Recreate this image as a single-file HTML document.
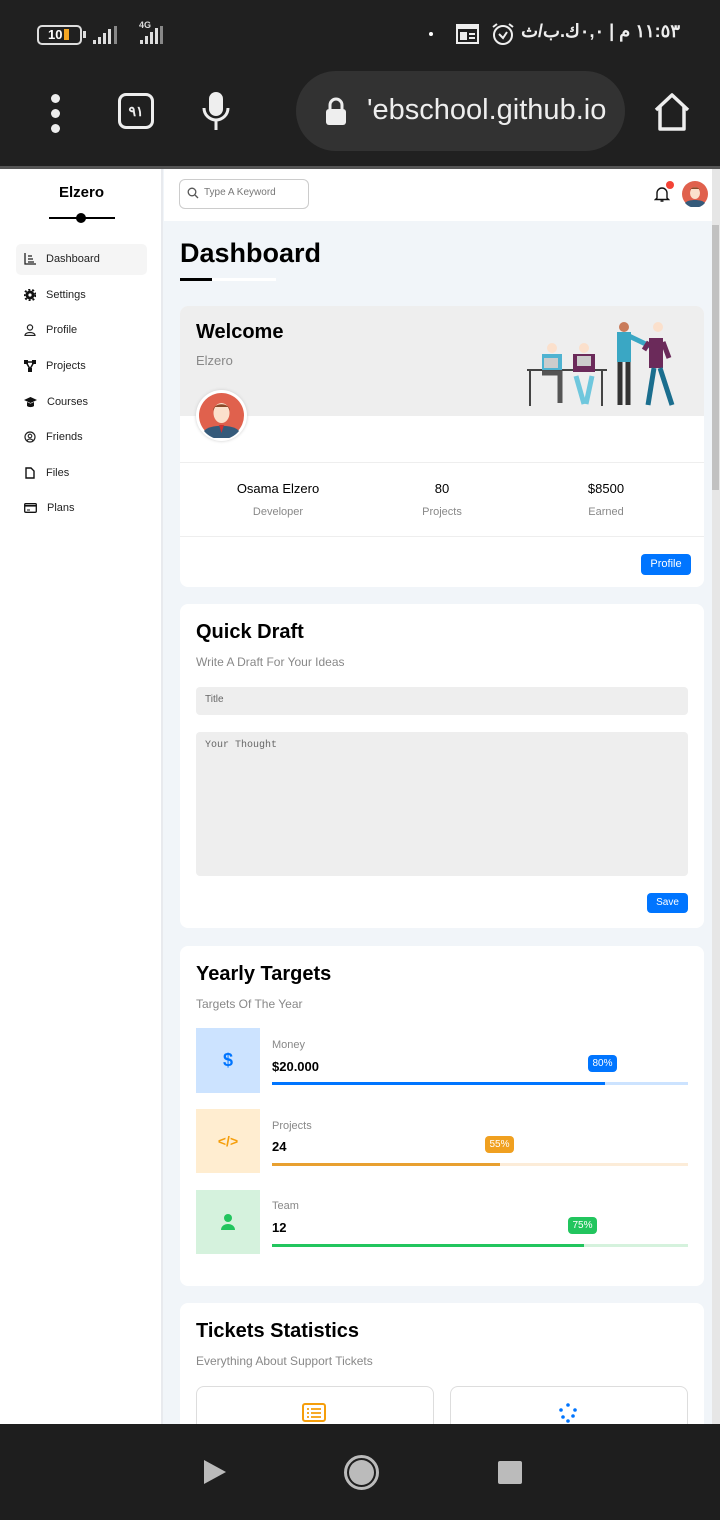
<!DOCTYPE html>
<html><head><meta charset="utf-8"><style>
*{box-sizing:border-box;margin:0;padding:0}
body{width:720px;height:1520px;overflow:hidden;background:#f1f5f9;font-family:"Liberation Sans","Noto Sans CJK SC",sans-serif;position:relative}
.abs{position:absolute}
.top{left:0;top:0;width:720px;height:166px;background:#202020}
.sep{left:0;top:166px;width:720px;height:3px;background:#555}
.side{left:0;top:169px;width:163px;height:1255px;background:#fff;border-right:2px solid #e8eaee}
.hdr{left:164px;top:169px;width:548px;height:52px;background:#fff}
.sb{left:712px;top:169px;width:8px;height:1255px;background:#e6e6e6}
.card{background:#fff;border-radius:8px}
.nav{left:0;top:1424px;width:720px;height:96px;background:#1e1e1e}
.mi{position:absolute;left:24px;font-size:11px;color:#222;display:flex;align-items:center}
.mi svg{margin-right:10px}
h2{font-size:20px;font-weight:bold;color:#000}
.sub{font-size:12px;color:#888}
</style></head><body>
<div class="abs top"></div>
<div class="abs" style="left:37px;top:25px;width:45px;height:20px;border:2px solid #ddd;border-radius:5px;color:#fff;font-size:13px;font-weight:bold;padding-left:9px;line-height:16px">10<span style="display:inline-block;width:5px;height:11px;background:#f5a623;margin-left:2px;vertical-align:-1px"></span></div>
<div class="abs" style="left:83px;top:31px;width:3px;height:7px;background:#ddd"></div>
<svg class="abs" style="left:93px;top:24px" width="30" height="22"><g fill="#ddd"><rect x="0" y="16" width="3" height="4"/><rect x="5" y="13" width="3" height="7"/><rect x="10" y="9" width="3" height="11"/><rect x="15" y="5" width="3" height="15"/><rect x="21" y="2" width="3" height="18" fill="#888"/></g></svg>
<div class="abs" style="left:139px;top:20px;color:#ddd;font-size:9px;font-weight:bold">4G</div>
<svg class="abs" style="left:136px;top:24px" width="40" height="22"><g fill="#ddd"><rect x="4" y="16" width="3" height="4"/><rect x="9" y="12" width="3" height="8"/><rect x="14" y="8" width="3" height="12"/><rect x="19" y="4" width="3" height="16"/><rect x="24" y="2" width="3" height="18" fill="#888"/></g></svg>
<div class="abs" style="left:429px;top:32px;width:4px;height:4px;background:#fff;border-radius:50%"></div>
<svg class="abs" style="left:456px;top:23px" width="24" height="22"><rect x="1" y="2" width="21" height="18" fill="none" stroke="#eee" stroke-width="2"/><rect x="1" y="2" width="21" height="4" fill="#eee"/><rect x="4" y="9" width="7" height="8" fill="#eee"/><rect x="13" y="10" width="6" height="2" fill="#eee"/><rect x="13" y="14" width="6" height="2" fill="#eee"/></svg>
<svg class="abs" style="left:490px;top:21px" width="26" height="26"><circle cx="13" cy="14" r="9" fill="none" stroke="#eee" stroke-width="2"/><path d="M9 13l4 4 4-6M3 6l4-3M23 6l-4-3" fill="none" stroke="#eee" stroke-width="2"/></svg>
<div class="abs" style="left:520px;top:21px;color:#eee;font-size:18px;font-weight:bold;direction:rtl;white-space:nowrap;width:160px;text-align:right;overflow:hidden">١١:٥٣ م | ٠,٠ك.ب/ث</div>
<div class="abs" style="left:51px;top:94px;width:9px;height:9px;border-radius:50%;background:#eee;box-shadow:0 15px 0 #eee,0 30px 0 #eee"></div>
<div class="abs" style="left:118px;top:93px;width:36px;height:36px;border:3px solid #eee;border-radius:8px;color:#eee;font-size:14px;text-align:center;line-height:30px;font-weight:bold">٩١</div>
<svg class="abs" style="left:200px;top:90px" width="32" height="42"><rect x="9" y="2" width="14" height="24" rx="7" fill="#eee"/><path d="M4 18a12 12 0 0 0 24 0M16 30v10" fill="none" stroke="#eee" stroke-width="3"/></svg>
<div class="abs" style="left:296px;top:71px;width:329px;height:80px;border-radius:40px;background:#323232"></div>
<svg class="abs" style="left:324px;top:96px" width="24" height="30"><path d="M6 13V9a6 6 0 0 1 12 0v4" fill="none" stroke="#eee" stroke-width="3"/><rect x="2" y="13" width="20" height="16" rx="3" fill="#eee"/></svg>
<div class="abs" style="left:367px;top:94px;color:#eee;font-size:29px;white-space:nowrap">'ebschool.github.io</div>
<svg class="abs" style="left:652px;top:92px" width="40" height="40"><path d="M4 18L20 3l16 15M8 15v22h24V15" fill="none" stroke="#eee" stroke-width="3.5" stroke-linejoin="round"/></svg>
<div class="abs sep"></div>
<div class="abs side"></div>
<div class="abs" style="left:0;top:184px;width:163px;text-align:center;font-weight:bold;font-size:15px">Elzero</div>
<div class="abs" style="left:49px;top:217px;width:66px;height:2px;background:#000"></div>
<div class="abs" style="left:76px;top:213px;width:10px;height:10px;border-radius:50%;background:#000"></div>
<div class="abs" style="left:16px;top:244px;width:131px;height:31px;background:#f5f5f5;border-radius:5px"></div>
<div class="mi" style="top:253px"><svg width="12" height="12"><path d="M1 0v11h11M4 3h4M4 6h5M4 9h6" stroke="#222" stroke-width="1.3" fill="none"/></svg>Dashboard</div>
<div class="mi" style="top:289px"><svg width="12" height="12"><circle cx="6" cy="6" r="4.5" fill="#111"/><circle cx="6" cy="6" r="5.5" fill="none" stroke="#111" stroke-width="2" stroke-dasharray="2 2"/><circle cx="6" cy="6" r="1.6" fill="#fff"/></svg>Settings</div>
<div class="mi" style="top:324px"><svg width="12" height="12"><circle cx="6" cy="3.5" r="2.6" fill="none" stroke="#222" stroke-width="1.2"/><path d="M1 11.5c0-4 10-4 10 0z" fill="none" stroke="#222" stroke-width="1.2"/></svg>Profile</div>
<div class="mi" style="top:360px"><svg width="12" height="12"><path d="M2 2h8M2 2l4 7M10 2L6 9" stroke="#111" stroke-width="1.5"/><rect x="0" y="0" width="4" height="4" fill="#111"/><rect x="8" y="0" width="4" height="4" fill="#111"/><rect x="4" y="8" width="4" height="4" fill="#111"/></svg>Projects</div>
<div class="mi" style="top:396px"><svg width="13" height="12"><path d="M0 4l6.5-3 6.5 3-6.5 3z" fill="#111"/><path d="M3 6v4c2 1.5 5 1.5 7 0V6l-3.5 1.6z" fill="#111"/></svg>Courses</div>
<div class="mi" style="top:431px"><svg width="12" height="12"><circle cx="6" cy="6" r="5" fill="none" stroke="#222" stroke-width="1.2"/><circle cx="6" cy="5" r="1.8" fill="none" stroke="#222" stroke-width="1.1"/><path d="M3 9.5c1.5-2 4.5-2 6 0" stroke="#222" stroke-width="1.1" fill="none"/></svg>Friends</div>
<div class="mi" style="top:467px"><svg width="12" height="12"><path d="M2 1h5l3 3v7H2z" fill="none" stroke="#111" stroke-width="1.4"/></svg>Files</div>
<div class="mi" style="top:502px"><svg width="13" height="12"><rect x="0.7" y="1.7" width="11.6" height="8.6" rx="1" fill="none" stroke="#111" stroke-width="1.3"/><rect x="1" y="3" width="11" height="1.6" fill="#111"/><rect x="3" y="7.5" width="3" height="1" fill="#111"/></svg>Plans</div>
<div class="abs hdr"></div>
<div class="abs" style="left:179px;top:179px;width:130px;height:30px;border:1px solid #ccc;border-radius:6px"></div>
<svg class="abs" style="left:187px;top:187px" width="12" height="12"><circle cx="5" cy="5" r="3.8" fill="none" stroke="#555" stroke-width="1.3"/><path d="M8 8l3 3" stroke="#555" stroke-width="1.3"/></svg>
<div class="abs" style="left:204px;top:187px;font-size:10px;color:#777">Type A Keyword</div>
<svg class="abs" style="left:654px;top:185px" width="16" height="18"><path d="M3 13V8a5 5 0 0 1 10 0v5l1.5 1.5h-13z" fill="none" stroke="#111" stroke-width="1.4"/><path d="M6.5 16h3" stroke="#111" stroke-width="1.5"/></svg>
<div class="abs" style="left:666px;top:181px;width:8px;height:8px;border-radius:50%;background:#f44336"></div>
<svg class="abs" style="left:682px;top:181px" width="26" height="26"><circle cx="13" cy="13" r="13" fill="#e0614d"/><path d="M3 22c3-4 17-4 20 0a13 13 0 0 1-20 0z" fill="#355a7a"/><ellipse cx="13" cy="12" rx="5" ry="6" fill="#fbe0cc"/><path d="M8 10c0-5 10-5 10 0l-1-2h-8z" fill="#8a4a2a"/></svg>
<div class="abs sb"></div>
<div class="abs" style="left:712px;top:225px;width:7px;height:265px;background:#c1c1c1"></div>
<div class="abs" style="left:180px;top:238px;font-size:27px;font-weight:bold;color:#000">Dashboard</div>
<div class="abs" style="left:180px;top:278px;width:96px;height:3px;background:#fff"></div>
<div class="abs" style="left:180px;top:278px;width:32px;height:3px;background:#000"></div>
<div class="abs card" style="left:180px;top:306px;width:524px;height:281px;overflow:hidden">
 <div style="height:110px;background:#eee"></div>
 <div style="position:absolute;left:0;top:156px;width:100%;height:1px;background:#eee"></div>
 <div style="position:absolute;left:0;top:230px;width:100%;height:1px;background:#eee"></div>
</div>
<div class="abs" style="left:196px;top:321px;font-size:20px;font-weight:bold">Welcome</div>
<div class="abs sub" style="left:196px;top:353px;font-size:13px">Elzero</div>
<svg class="abs" style="left:524px;top:318px" width="170" height="92" viewBox="0 0 170 92">
<path d="M3 52h80M6 52v36M78 52v36" stroke="#444" stroke-width="2"/>
<rect x="18" y="36" width="20" height="16" fill="#4fb3d1"/><circle cx="28" cy="30" r="5" fill="#fbe0cc"/><path d="M18 55h18v30" stroke="#555" stroke-width="5" fill="none"/><rect x="20" y="40" width="14" height="10" fill="#ccc"/>
<rect x="49" y="36" width="22" height="18" fill="#6b2a5a"/><circle cx="60" cy="30" r="5" fill="#fbe0cc"/><path d="M52 58l8 28M68 58l-6 28" stroke="#6fc7dd" stroke-width="5"/><rect x="53" y="38" width="14" height="10" fill="#ccc"/>
<path d="M93 14h14v30h-14z" fill="#3aa7c4"/><circle cx="100" cy="9" r="5" fill="#c97b5a"/><path d="M96 44v43M104 44v43" stroke="#333" stroke-width="5"/><path d="M105 18l25 12" stroke="#3aa7c4" stroke-width="5"/>
<path d="M125 20h14v30h-14z" fill="#6b2a5a"/><circle cx="134" cy="9" r="5" fill="#fbe0cc"/><path d="M130 50l-6 37M136 50l12 37" stroke="#1b6e8e" stroke-width="5"/><path d="M125 24l-5 8M139 24l6 16" stroke="#6b2a5a" stroke-width="5"/>
</svg>
<div class="abs" style="left:196px;top:390px;width:51px;height:51px;border-radius:50%;background:#fff;box-shadow:0 0 3px #ccc"></div>
<svg class="abs" style="left:199px;top:393px" width="45" height="45"><circle cx="22.5" cy="22.5" r="22.5" fill="#e0614d"/><path d="M5 38c5-7 30-7 35 0a22.5 22.5 0 0 1-35 0z" fill="#355a7a"/><path d="M20 32l2.5 8 2.5-8z" fill="#c33"/><ellipse cx="22.5" cy="20" rx="8" ry="10" fill="#fbe0cc"/><path d="M14 18c0-9 17-9 17 0l-2-4h-13z" fill="#8a4a2a"/></svg>
<div class="abs" style="left:180px;top:481px;width:196px;text-align:center;font-size:13px">Osama Elzero</div>
<div class="abs sub" style="left:180px;top:506px;width:196px;text-align:center;font-size:11px">Developer</div>
<div class="abs" style="left:392px;top:481px;width:100px;text-align:center;font-size:13px">80</div>
<div class="abs sub" style="left:392px;top:506px;width:100px;text-align:center;font-size:11px">Projects</div>
<div class="abs" style="left:556px;top:481px;width:100px;text-align:center;font-size:13px">$8500</div>
<div class="abs sub" style="left:556px;top:506px;width:100px;text-align:center;font-size:11px">Earned</div>
<div class="abs" style="left:641px;top:554px;width:50px;height:21px;background:#0075ff;border-radius:4px;color:#fff;font-size:11px;text-align:center;line-height:21px">Profile</div>
<div class="abs card" style="left:180px;top:604px;width:524px;height:324px"></div>
<div class="abs" style="left:196px;top:621px"><h2>Quick Draft</h2></div>
<div class="abs sub" style="left:196px;top:655px">Write A Draft For Your Ideas</div>
<div class="abs" style="left:196px;top:687px;width:492px;height:28px;background:#eee;border-radius:4px;font-size:10px;color:#666;padding:7px 9px">Title</div>
<div class="abs" style="left:196px;top:732px;width:492px;height:144px;background:#eee;border-radius:4px;font-size:10px;color:#666;padding:8px 9px;font-family:'Liberation Mono',monospace">Your Thought</div>
<div class="abs" style="left:647px;top:893px;width:41px;height:20px;background:#0075ff;border-radius:4px;color:#fff;font-size:10px;text-align:center;line-height:20px">Save</div>
<div class="abs card" style="left:180px;top:946px;width:524px;height:340px"></div>
<div class="abs" style="left:196px;top:963px"><h2>Yearly Targets</h2></div>
<div class="abs sub" style="left:196px;top:997px">Targets Of The Year</div>
<div class="abs" style="left:196px;top:1028px;width:64px;height:65px;background:#cce3ff;color:#0075ff;font-size:18px;font-weight:bold;text-align:center;line-height:65px">$</div>
<div class="abs sub" style="left:272px;top:1039px;font-size:11px">Money</div>
<div class="abs" style="left:272px;top:1059px;font-size:13px;font-weight:bold">$20.000</div>
<div class="abs" style="left:272px;top:1082px;width:416px;height:3px;background:#cce3ff"></div>
<div class="abs" style="left:272px;top:1082px;width:333px;height:3px;background:#0075ff"></div>
<div class="abs" style="left:588px;top:1055px;width:29px;height:17px;background:#0075ff;border-radius:4px;color:#fff;font-size:10px;text-align:center;line-height:17px">80%</div>
<div class="abs" style="left:196px;top:1109px;width:64px;height:64px;background:#ffedd0;color:#f59e0b;font-size:14px;font-weight:bold;text-align:center;line-height:64px">&lt;/&gt;</div>
<div class="abs sub" style="left:272px;top:1120px;font-size:11px">Projects</div>
<div class="abs" style="left:272px;top:1139px;font-size:13px;font-weight:bold">24</div>
<div class="abs" style="left:272px;top:1163px;width:416px;height:3px;background:#fcecd8"></div>
<div class="abs" style="left:272px;top:1163px;width:228px;height:3px;background:#e8a030"></div>
<div class="abs" style="left:485px;top:1136px;width:29px;height:17px;background:#f0a020;border-radius:4px;color:#fff;font-size:10px;text-align:center;line-height:17px">55%</div>
<div class="abs" style="left:196px;top:1190px;width:64px;height:64px;background:#d5f2dd"></div>
<svg class="abs" style="left:220px;top:1213px" width="16" height="18"><circle cx="8" cy="5" r="4" fill="#22c55e"/><path d="M1 17c0-8 14-8 14 0z" fill="#22c55e"/></svg>
<div class="abs sub" style="left:272px;top:1200px;font-size:11px">Team</div>
<div class="abs" style="left:272px;top:1220px;font-size:13px;font-weight:bold">12</div>
<div class="abs" style="left:272px;top:1244px;width:416px;height:3px;background:#d5f2dd"></div>
<div class="abs" style="left:272px;top:1244px;width:312px;height:3px;background:#22c55e"></div>
<div class="abs" style="left:568px;top:1217px;width:29px;height:17px;background:#22c55e;border-radius:4px;color:#fff;font-size:10px;text-align:center;line-height:17px">75%</div>
<div class="abs card" style="left:180px;top:1303px;width:524px;height:140px"></div>
<div class="abs" style="left:196px;top:1320px"><h2>Tickets Statistics</h2></div>
<div class="abs sub" style="left:196px;top:1354px">Everything About Support Tickets</div>
<div class="abs" style="left:196px;top:1386px;width:238px;height:60px;border:1px solid #ddd;border-radius:8px"></div>
<div class="abs" style="left:450px;top:1386px;width:238px;height:60px;border:1px solid #ddd;border-radius:8px"></div>
<svg class="abs" style="left:302px;top:1403px" width="25" height="20"><rect x="1" y="1" width="22" height="17" rx="2" fill="none" stroke="#f59e0b" stroke-width="2"/><path d="M5 6h2M9 6h10M5 10h2M9 10h10M5 14h2M9 14h10" stroke="#f59e0b" stroke-width="1.8"/></svg>
<svg class="abs" style="left:556px;top:1402px" width="24" height="22" fill="#0075ff"><circle cx="12" cy="3" r="1.8"/><circle cx="5" cy="8" r="1.8"/><circle cx="19" cy="8" r="1.8"/><circle cx="7" cy="15" r="1.8"/><circle cx="17" cy="14" r="1.8"/><circle cx="12" cy="19" r="1.8"/></svg>
<div class="abs nav"></div>
<svg class="abs" style="left:203px;top:1459px" width="24" height="26"><path d="M1 1l22 12L1 25z" fill="#bbb"/></svg>
<div class="abs" style="left:344px;top:1455px;width:35px;height:35px;border:3px solid #bbb;border-radius:50%"></div>
<div class="abs" style="left:349px;top:1460px;width:25px;height:25px;background:#bbb;border-radius:50%"></div>
<div class="abs" style="left:498px;top:1461px;width:24px;height:23px;background:#bbb;border-radius:2px"></div>
</body></html>
